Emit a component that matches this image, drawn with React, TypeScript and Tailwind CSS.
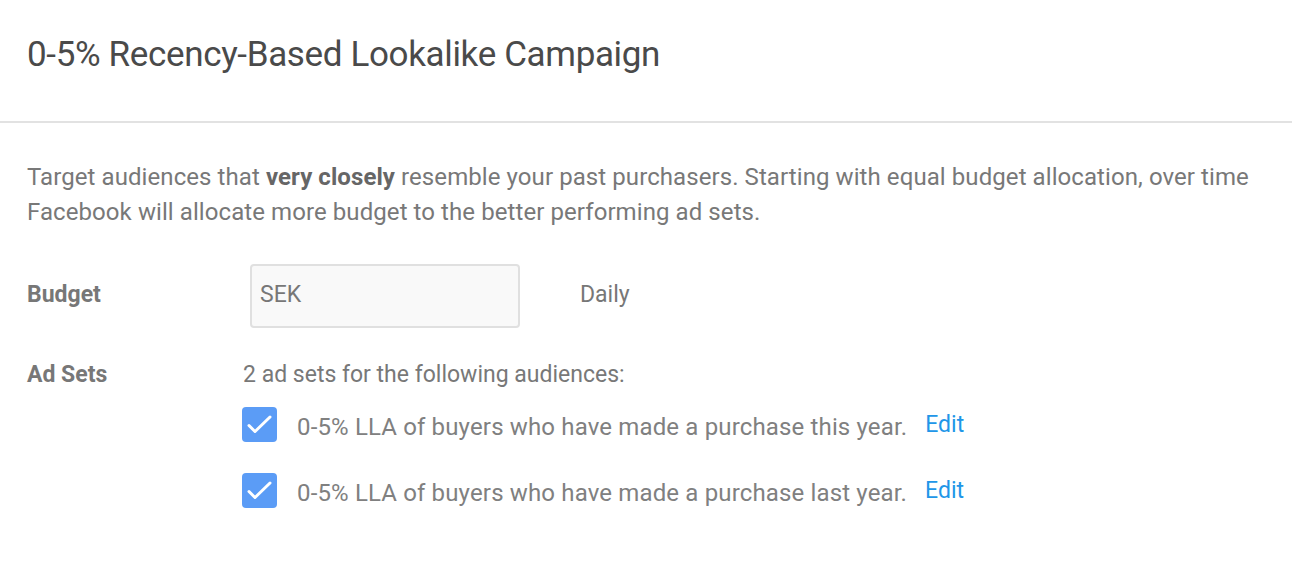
export default function App() {
  return (
    <div className="min-h-screen bg-white font-['Roboto',sans-serif] text-[#787878]">
      <header className="h-[123px] border-b-2 border-[#e2e2e2] px-[27px] flex items-center">
        <h1 className="text-[35px] text-[#4a4a4a] font-normal tracking-[-0.35px] pb-[10px]">
          0-5% Recency-Based Lookalike Campaign
        </h1>
      </header>

      <div className="px-[27px] pt-[37px]">
        <p className="text-[24px] leading-[35px] tracking-[0.08px] max-w-[1250px]">
          Target audiences that <b className="font-bold text-[#666]">very closely</b> resemble your past purchasers.
          Starting with equal budget allocation, over time Facebook will allocate more budget to the better performing
          ad sets.
        </p>

        <div className="flex items-center mt-[32px]">
          <div className="w-[216px] text-[23px] font-bold text-[#777]">Budget</div>
          <div className="w-[270px] h-[64px] ml-[7px] mt-[2px] rounded-[4px] border-2 border-[#e0e0e0] bg-[#f9f9f9] px-[8px] pt-[12px] text-[23px] text-[#777] self-start">
            SEK
          </div>
          <div className="ml-[60px] text-[23px] text-[#777]">Daily</div>
        </div>

        <div className="flex mt-[32px]">
          <div className="w-[216px] text-[23px] font-bold text-[#777] leading-[30px]">Ad Sets</div>
          <div className="flex flex-col">
            <div className="text-[23px] leading-[30px]">2 ad sets for the following audiences:</div>
            <div className="flex flex-col gap-[31px] mt-[17px]">
              {["this year.", "last year."].map((t) => (
                <div key={t} className="flex items-center">
                  <div className="w-[35px] h-[35px] -ml-[1px] rounded-[4px] bg-[#5b9cf6] flex items-center justify-center">
                    <svg width="35" height="35" viewBox="0 0 35 35" fill="none">
                      <path d="M7 18.5l6 6L28 10" stroke="white" strokeWidth="3" strokeLinecap="round" strokeLinejoin="round" />
                    </svg>
                  </div>
                  <span className="ml-[20px] text-[24px] leading-[30px] tracking-[0.15px] text-[#808080] mt-[4px]">
                    0-5% LLA of buyers who have made a purchase {t}
                  </span>
                  <a className="ml-[18px] text-[23px] leading-[30px] text-[#2196e8] cursor-pointer">Edit</a>
                </div>
              ))}
            </div>
          </div>
        </div>
      </div>
    </div>
  );
}
